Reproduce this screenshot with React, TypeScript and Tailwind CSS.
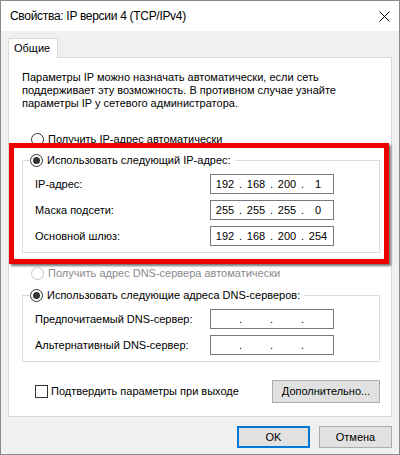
import React from "react";

const F = { fontFamily: '"Liberation Sans", Arial, sans-serif' };

function Radio({ checked, disabled }: { checked?: boolean; disabled?: boolean }) {
  return (
    <span
      className={`flex h-[13px] w-[13px] shrink-0 items-center justify-center rounded-full border bg-white ${
        disabled ? "border-[#c6c6c6]" : "border-[#333333]"
      }`}
    >
      {checked && <span className="h-[7px] w-[7px] rounded-full bg-[#333333]" />}
    </span>
  );
}

function IpBox({ parts }: { parts: string[] }) {
  return (
    <div className="flex h-[20px] w-[124px] items-center border border-[#7a7a7a] bg-white pl-[1px] text-[11px] text-black">
      {[0, 1, 2, 3].map((i) => (
        <React.Fragment key={i}>
          <span className="w-[26px] text-center">{parts[i] ?? ""}</span>
          {i < 3 && <span className="w-[5px] text-center">.</span>}
        </React.Fragment>
      ))}
    </div>
  );
}

function Row({ label, parts }: { label: string; parts: string[] }) {
  return (
    <div className="grid h-[20px] grid-cols-[175px_124px] items-center">
      <span>{label}</span>
      <IpBox parts={parts} />
    </div>
  );
}

export default function App() {
  return (
    <div
      className="flex h-[455px] w-[400px] flex-col border border-[#8a8a8a] bg-[#f0f0f0] text-[11px] leading-[13px] text-black"
      style={F}
    >
      {/* title bar */}
      <div className="flex h-[30px] shrink-0 items-center justify-between bg-white pl-[9px] pr-[9px]">
        <span className="text-[12px] tracking-[-0.3px]">Свойства: IP версии 4 (TCP/IPv4)</span>
        <svg width="11" height="11" viewBox="0 0 11 11">
          <path d="M0.5 0.5 L10.5 10.5 M10.5 0.5 L0.5 10.5" stroke="#000" strokeWidth="1" fill="none" />
        </svg>
      </div>

      {/* body */}
      <div className="flex flex-1 flex-col px-[7px] pt-[7px]">
        {/* tab */}
        <div className="relative z-10 -mb-px flex h-[20px] w-[50px] items-center border border-b-0 border-[#d9d9d9] bg-white pl-[5px]">
          Общие
        </div>
        {/* panel */}
        <div className="flex h-[360px] flex-col border border-[#d9d9d9] bg-white">
          <p className="ml-[13px] mt-[13px]">
            Параметры IP можно назначать автоматически, если сеть
            <br />
            поддерживает эту возможность. В противном случае узнайте
            <br />
            параметры IP у сетевого администратора.
          </p>

          <div className="ml-[22px] mt-[23px] flex h-[13px] items-center gap-[4px]">
            <Radio />
            <span>Получить IP-адрес автоматически</span>
          </div>

          {/* red highlight */}
          <div className="mr-[2px] mt-[-3px] border-[5px] border-[#ee0000] pb-[6px] pl-[8px] pr-[4px] pt-[6px] shadow-[2px_2px_2px_rgba(0,0,0,0.55)]">
            <fieldset className="border border-[#dcdcdc] pb-[6px]">
              <legend className="ml-[7px] flex h-[13px] items-center gap-[4px] pr-[4px]">
                <Radio checked />
                <span>Использовать следующий IP-адрес:</span>
              </legend>
              <div className="flex flex-col gap-[6px] pl-[12px] pt-[7px]">
                <Row label="IP-адрес:" parts={["192", "168", "200", "1"]} />
                <Row label="Маска подсети:" parts={["255", "255", "255", "0"]} />
                <Row label="Основной шлюз:" parts={["192", "168", "200", "254"]} />
              </div>
            </fieldset>
          </div>

          <div className="ml-[22px] mt-[3px] flex h-[13px] items-center gap-[4px] text-[#8a8a8a]">
            <Radio disabled />
            <span>Получить адрес DNS-сервера автоматически</span>
          </div>

          <fieldset className="ml-[13px] mr-[11px] mt-[9px] border border-[#dcdcdc] pb-[6px]">
            <legend className="ml-[7px] flex h-[13px] items-center gap-[4px] pr-[4px]">
              <Radio checked />
              <span>Использовать следующие адреса DNS-серверов:</span>
            </legend>
            <div className="flex flex-col gap-[6px] pl-[12px] pt-[7px]">
              <Row label="Предпочитаемый DNS-сервер:" parts={[]} />
              <Row label="Альтернативный DNS-сервер:" parts={[]} />
            </div>
          </fieldset>

          <div className="ml-[26px] mr-[11px] mt-[18px] flex items-center justify-between">
            <div className="flex items-center gap-[3px]">
              <span className="h-[13px] w-[13px] border border-[#333333] bg-white" />
              <span>Подтвердить параметры при выходе</span>
            </div>
            <button className="flex h-[23px] w-[108px] items-center justify-center border border-[#adadad] bg-[#e1e1e1]">
              Дополнительно...
            </button>
          </div>
        </div>

        {/* bottom buttons */}
        <div className="mt-[9px] flex justify-end gap-[9px]">
          <button className="flex h-[22px] w-[73px] items-center justify-center border-2 border-[#0078d7] bg-[#e1e1e1]">
            OK
          </button>
          <button className="flex h-[22px] w-[73px] items-center justify-center border border-[#adadad] bg-[#e1e1e1]">
            Отмена
          </button>
        </div>
      </div>
    </div>
  );
}
